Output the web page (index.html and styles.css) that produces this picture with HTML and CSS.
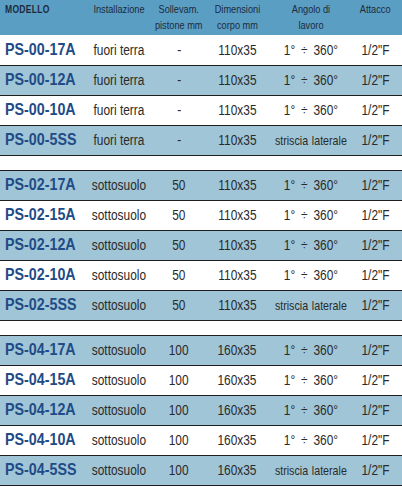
FILE: index.html
```html
<!DOCTYPE html>
<html>
<head>
<meta charset="utf-8">
<link rel="stylesheet" href="styles.css">
</head>
<body>
<table class="tbl">
  <thead>
    <tr class="head">
      <th class="c-model"><span class="cn">MODELLO</span></th>
      <th class="c-inst"><span class="cn">Installazione</span></th>
      <th class="c-sol"><span class="cn">Sollevam.<br>pistone mm</span></th>
      <th class="c-dim"><span class="cn">Dimensioni<br>corpo mm</span></th>
      <th class="c-ang"><span class="cn">Angolo di<br>lavoro</span></th>
      <th class="c-att"><span class="cn">Attacco</span></th>
    </tr>
  </thead>
  <tbody>
    <tr class="w"><td class="m"><span class="cn">PS-00-17A</span></td><td><span class="cn">fuori terra</span></td><td><span class="cn">-</span></td><td><span class="cn">110x35</span></td><td class="c-ang"><span class="cn">1° ÷ 360°</span></td><td class="c-att"><span class="cn">1/2"F</span></td></tr>
    <tr class="b"><td class="m"><span class="cn">PS-00-12A</span></td><td><span class="cn">fuori terra</span></td><td><span class="cn">-</span></td><td><span class="cn">110x35</span></td><td class="c-ang"><span class="cn">1° ÷ 360°</span></td><td class="c-att"><span class="cn">1/2"F</span></td></tr>
    <tr class="w"><td class="m"><span class="cn">PS-00-10A</span></td><td><span class="cn">fuori terra</span></td><td><span class="cn">-</span></td><td><span class="cn">110x35</span></td><td class="c-ang"><span class="cn">1° ÷ 360°</span></td><td class="c-att"><span class="cn">1/2"F</span></td></tr>
    <tr class="b"><td class="m"><span class="cn">PS-00-5SS</span></td><td><span class="cn">fuori terra</span></td><td><span class="cn">-</span></td><td><span class="cn">110x35</span></td><td class="c-ang s"><span class="cn">striscia laterale</span></td><td class="c-att"><span class="cn">1/2"F</span></td></tr>
    <tr class="gap"><td colspan="6"></td></tr>
    <tr class="b"><td class="m"><span class="cn">PS-02-17A</span></td><td><span class="cn">sottosuolo</span></td><td><span class="cn">50</span></td><td><span class="cn">110x35</span></td><td class="c-ang"><span class="cn">1° ÷ 360°</span></td><td class="c-att"><span class="cn">1/2"F</span></td></tr>
    <tr class="w"><td class="m"><span class="cn">PS-02-15A</span></td><td><span class="cn">sottosuolo</span></td><td><span class="cn">50</span></td><td><span class="cn">110x35</span></td><td class="c-ang"><span class="cn">1° ÷ 360°</span></td><td class="c-att"><span class="cn">1/2"F</span></td></tr>
    <tr class="b"><td class="m"><span class="cn">PS-02-12A</span></td><td><span class="cn">sottosuolo</span></td><td><span class="cn">50</span></td><td><span class="cn">110x35</span></td><td class="c-ang"><span class="cn">1° ÷ 360°</span></td><td class="c-att"><span class="cn">1/2"F</span></td></tr>
    <tr class="w"><td class="m"><span class="cn">PS-02-10A</span></td><td><span class="cn">sottosuolo</span></td><td><span class="cn">50</span></td><td><span class="cn">110x35</span></td><td class="c-ang"><span class="cn">1° ÷ 360°</span></td><td class="c-att"><span class="cn">1/2"F</span></td></tr>
    <tr class="b"><td class="m"><span class="cn">PS-02-5SS</span></td><td><span class="cn">sottosuolo</span></td><td><span class="cn">50</span></td><td><span class="cn">110x35</span></td><td class="c-ang s"><span class="cn">striscia laterale</span></td><td class="c-att"><span class="cn">1/2"F</span></td></tr>
    <tr class="gap"><td colspan="6"></td></tr>
    <tr class="b"><td class="m"><span class="cn">PS-04-17A</span></td><td><span class="cn">sottosuolo</span></td><td><span class="cn">100</span></td><td><span class="cn">160x35</span></td><td class="c-ang"><span class="cn">1° ÷ 360°</span></td><td class="c-att"><span class="cn">1/2"F</span></td></tr>
    <tr class="w"><td class="m"><span class="cn">PS-04-15A</span></td><td><span class="cn">sottosuolo</span></td><td><span class="cn">100</span></td><td><span class="cn">160x35</span></td><td class="c-ang"><span class="cn">1° ÷ 360°</span></td><td class="c-att"><span class="cn">1/2"F</span></td></tr>
    <tr class="b"><td class="m"><span class="cn">PS-04-12A</span></td><td><span class="cn">sottosuolo</span></td><td><span class="cn">100</span></td><td><span class="cn">160x35</span></td><td class="c-ang"><span class="cn">1° ÷ 360°</span></td><td class="c-att"><span class="cn">1/2"F</span></td></tr>
    <tr class="w"><td class="m"><span class="cn">PS-04-10A</span></td><td><span class="cn">sottosuolo</span></td><td><span class="cn">100</span></td><td><span class="cn">160x35</span></td><td class="c-ang"><span class="cn">1° ÷ 360°</span></td><td class="c-att"><span class="cn">1/2"F</span></td></tr>
    <tr class="b"><td class="m"><span class="cn">PS-04-5SS</span></td><td><span class="cn">sottosuolo</span></td><td><span class="cn">100</span></td><td><span class="cn">160x35</span></td><td class="c-ang s"><span class="cn">striscia laterale</span></td><td class="c-att"><span class="cn">1/2"F</span></td></tr>
  </tbody>
</table>
</body>
</html>
```

FILE: styles.css
```css
html, body {
  margin: 0;
  padding: 0;
  background: #ffffff;
}

.tbl {
  width: 402px;
  border-collapse: collapse;
  table-layout: fixed;
  font-family: "Liberation Sans", Arial, sans-serif;
  color: #2a2a2a;
}

.tbl th, .tbl td {
  box-sizing: border-box;
  padding: 0;
  text-align: center;
  white-space: nowrap;
}

/* condensed lettering: glyphs narrowed around their centre */
.cn {
  display: inline-block;
  margin: 0 -24px;
  transform: scaleX(0.85);
  transform-origin: center;
}

.head {
  background: #5b9ec4;
  height: 35px;
}

.head th {
  vertical-align: top;
  font-weight: normal;
  font-size: 11.5px;
  line-height: 16px;
  color: #1c2b3a;
  padding-top: 1px;
}

.head th .cn {
  transform: scaleX(0.8);
}

.head th.c-model {
  font-weight: bold;
  text-align: left;
  padding-left: 5px;
}

.head th.c-model .cn,
.tbl td.m .cn {
  margin: 0;
  transform-origin: left center;
}

.head th.c-model .cn {
  transform: scaleX(0.74);
  letter-spacing: 0.4px;
}

.c-model { width: 88px; }
.c-inst { width: 62px; }
.c-sol { width: 58px; }
.c-dim { width: 58px; }
.c-ang { width: 96px; }
.c-att { width: 40px; }

.tbl th.c-ang, .tbl td.c-ang {
  padding-right: 6px;
}

.tbl th.c-att, .tbl td.c-att {
  padding-right: 14px;
}

.tbl tbody td {
  height: 30px;
  border-bottom: 1px solid #1e1e1e;
  font-size: 14px;
  vertical-align: middle;
}

.tbl tbody td.c-ang {
  word-spacing: 3px;
}

.w { background: #ffffff; }
.b { background: #a0c5d6; }

.tbl td.m {
  text-align: left;
  padding-left: 5px;
  font-weight: bold;
  font-size: 17px;
  color: #1f4b87;
}

.tbl td.m .cn {
  transform: scaleX(0.84);
}

.tbl tbody td.s {
  font-size: 13px;
  word-spacing: 1px;
}

.tbl td.s .cn {
  transform: scaleX(0.82);
}

.tbl .gap td {
  height: 15px;
  background: #ffffff;
}
```
